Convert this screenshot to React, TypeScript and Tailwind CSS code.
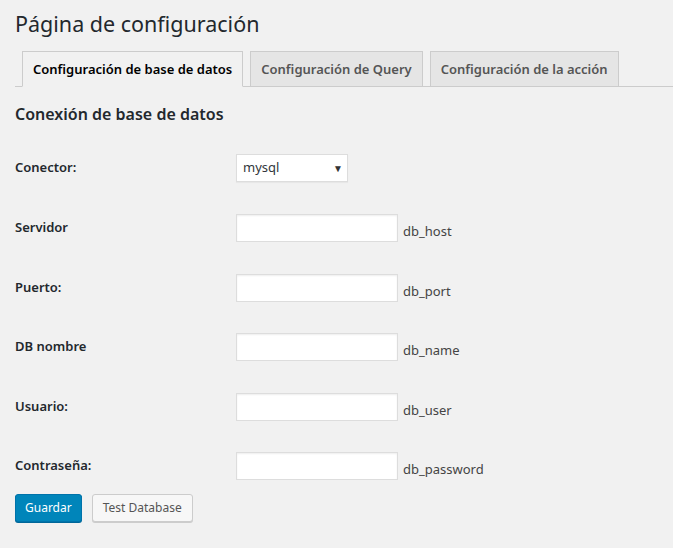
import React from "react";

const fields = [
  { label: "Servidor", name: "db_host" },
  { label: "Puerto:", name: "db_port" },
  { label: "DB nombre", name: "db_name" },
  { label: "Usuario:", name: "db_user" },
  { label: "Contraseña:", name: "db_password" },
];

export default function App() {
  return (
    <div className="min-h-[548px] bg-[#f1f1f1] pl-[15px] font-['Noto_Sans',sans-serif] text-[#444]">
      <h1 className="pt-[9px] pb-[4px] text-[21.5px] leading-[29px] font-normal text-[#23282d]">
        Página de configuración
      </h1>
      <div className="mt-[9px] flex gap-[7px] border-b border-[#ccc] pl-[7px]">
        <div className="-mb-px border border-[#ccc] border-b-[#f1f1f1] bg-[#f1f1f1] px-[10px] py-[5px] text-[13px] leading-[24px] font-semibold text-black">
          Configuración de base de datos
        </div>
        <div className="-mb-px border border-[#ccc] bg-[#e5e5e5] px-[10px] py-[5px] text-[13px] leading-[24px] font-semibold text-[#555]">
          Configuración de Query
        </div>
        <div className="-mb-px border border-[#ccc] bg-[#e5e5e5] px-[10px] py-[5px] text-[13px] leading-[24px] font-semibold text-[#555]">
          Configuración de la acción
        </div>
      </div>
      <h2 className="mt-[16px] text-[16px] leading-[22px] font-semibold text-[#23282d]">
        Conexión de base de datos
      </h2>
      <div className="mt-[29px] flex h-[60px] items-start">
        <div className="flex h-[28px] w-[221px] items-center text-[13px] font-semibold text-[#23282d]">
          Conector:
        </div>
        <div className="flex h-[28px] w-[112px] items-center justify-between border border-[#ddd] bg-white pl-[6px] pr-[4px] text-[13px] text-[#32373c] shadow-[0_1px_1px_rgba(0,0,0,0.04)]">
          <span>mysql</span>
          <span className="text-[10px] text-[#333]">▼</span>
        </div>
      </div>
      {fields.map((f, i) => (
        <div
          key={f.name}
          className={
            i === fields.length - 1 ? "flex h-[42px] items-start" : "flex h-[59.5px] items-start"
          }
        >
          <div className="flex h-[28px] w-[221px] items-center text-[13px] font-semibold text-[#23282d]">
            {f.label}
          </div>
          <div className="h-[28px] w-[162px] border border-[#ddd] bg-white shadow-[inset_0_1px_2px_rgba(0,0,0,0.07)]" />
          <div className="ml-[5px] pt-[7px] text-[13px] leading-[20px] text-[#444]">{f.name}</div>
        </div>
      ))}
      <div className="flex gap-[10px]">
        <button className="h-[28px] rounded-[3px] border border-[#0073aa] bg-[#0085ba] px-[9px] text-[12px] text-white shadow-[0_1px_0_#006799]">
          Guardar
        </button>
        <button className="h-[28px] rounded-[3px] border border-[#ccc] bg-[#f7f7f7] px-[10px] text-[12px] text-[#555] shadow-[0_1px_0_#ccc]">
          Test Database
        </button>
      </div>
    </div>
  );
}
